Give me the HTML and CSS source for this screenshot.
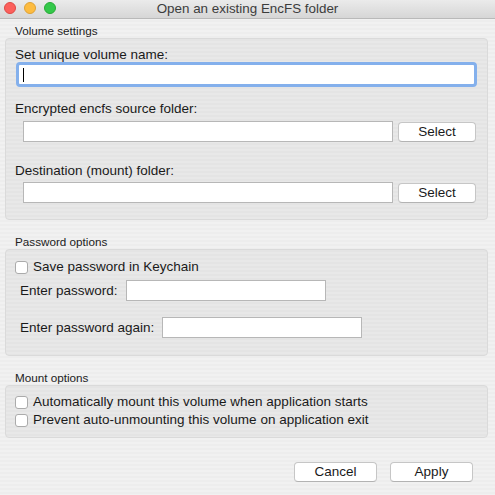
FILE: index.html
```html
<!DOCTYPE html>
<html>
<head>
<meta charset="utf-8">
<link rel="stylesheet" href="styles.css">
</head>
<body>
<div class="window">
  <div class="titlebar">
    <div class="lights">
      <span class="light red"></span>
      <span class="light yellow"></span>
      <span class="light green"></span>
    </div>
    <div class="title">Open an existing EncFS folder</div>
  </div>
  <div class="content">
    <div class="section-label first">Volume settings</div>
    <div class="group g1">
      <div class="field-label">Set unique volume name:</div>
      <div class="focus-input"><span class="caret"></span></div>
      <div class="field-label l2">Encrypted encfs source folder:</div>
      <div class="path-row r2">
        <div class="input path"></div>
        <div class="btn select">Select</div>
      </div>
      <div class="field-label l3">Destination (mount) folder:</div>
      <div class="path-row r3">
        <div class="input path"></div>
        <div class="btn select">Select</div>
      </div>
    </div>

    <div class="section-label">Password options</div>
    <div class="group g2">
      <div class="check-row"><span class="checkbox"></span><span>Save password in Keychain</span></div>
      <div class="pw-row p1"><span>Enter password:</span><div class="input pw1"></div></div>
      <div class="pw-row p2"><span>Enter password again:</span><div class="input pw2"></div></div>
    </div>

    <div class="section-label">Mount options</div>
    <div class="group g3">
      <div class="check-row tight"><span class="checkbox"></span><span>Automatically mount this volume when application starts</span></div>
      <div class="check-row tight"><span class="checkbox"></span><span>Prevent auto-unmounting this volume on application exit</span></div>
    </div>

    <div class="actions">
      <div class="btn action">Cancel</div>
      <div class="btn action">Apply</div>
    </div>
  </div>
</div>
</body>
</html>
```
FILE: styles.css
```css
* { box-sizing: border-box; }
html, body { margin: 0; padding: 0; }
body {
  width: 495px;
  height: 495px;
  overflow: hidden;
  font-family: "Liberation Sans", Arial, sans-serif;
  color: #1a1a1a;
  background: repeating-linear-gradient(180deg, #ededed 0px, #ededed 2px, #f1f1f1 2px, #f1f1f1 4px);
}
.window { width: 495px; height: 495px; display: flex; flex-direction: column; }
.titlebar {
  position: relative;
  height: 19px;
  background: linear-gradient(180deg, #ebebeb 0%, #d6d6d6 100%);
  border-bottom: 1px solid #b9b9b9;
  display: flex;
  align-items: center;
  justify-content: center;
}
.lights { position: absolute; left: 4px; top: 2px; display: flex; gap: 8px; }
.light { width: 12px; height: 12px; border-radius: 50%; display: block; }
.red { background: #fc605c; border: 1px solid #de4a45; }
.yellow { background: #fdbc40; border: 1px solid #dea236; }
.green { background: #34c84a; border: 1px solid #27aa35; }
.title { font-size: 13.4px; color: #3c3c3c; line-height: 18px; }

.content { display: flex; flex-direction: column; }
.section-label {
  font-size: 11.7px;
  line-height: 14px;
  padding-left: 15px;
  margin-top: 15px;
  color: #222;
}
.section-label.first { margin-top: 5px; }
.group {
  margin: 0 7px 0 5px;
  border: 1px solid #dadada;
  border-radius: 4px;
  background: repeating-linear-gradient(180deg, #e4e4e4 0px, #e4e4e4 2px, #e8e8e8 2px, #e8e8e8 4px);
  display: flex;
  flex-direction: column;
}
.g1 { padding: 6px 0 16px 0; }
.field-label { font-size: 13.5px; line-height: 16px; padding-left: 9px; padding-top: 2px; }
.focus-input {
  margin: -1px 10px 0 10px;
  height: 25px;
  border: 3px solid #84b0ec;
  border-radius: 4px;
  background: #fff;
  position: relative;
}
.caret { position: absolute; left: 4px; top: 3px; width: 1px; height: 14px; background: #000; }
.l2 { margin-top: 12px; }
.l3 { margin-top: 19px; }
.path-row { display: flex; align-items: center; gap: 5px; padding-left: 17px; }
.r2 { margin-top: 4px; }
.r3 { margin-top: 3px; }
.input { height: 21px; background: #fff; border: 1px solid #b7b7b7; }
.path { width: 370px; }
.btn {
  height: 20px;
  background: #fff;
  border: 1px solid #c6c6c6;
  border-bottom-color: #b3b3b3;
  border-radius: 4px;
  font-size: 13.5px;
  line-height: 18px;
  text-align: center;
  color: #1a1a1a;
}
.select { width: 78px; }

.g2 { padding: 9px 0 17px 0; }
.check-row { display: flex; align-items: center; gap: 5px; padding-left: 9px; font-size: 13.5px; line-height: 16px; }
.checkbox { width: 13px; height: 13px; border: 1px solid #ababab; border-radius: 3px; background: #fff; display: block; }
.pw-row { display: flex; align-items: center; gap: 8px; padding-left: 14px; font-size: 13.5px; }
.p1 { margin-top: 5px; }
.p2 { margin-top: 16px; }
.pw1 { width: 200px; }
.pw2 { width: 200px; }

.g3 { padding: 7px 0 8px 0; }
.check-row.tight { line-height: 18px; }

.actions { display: flex; justify-content: flex-end; gap: 13px; padding-right: 22px; margin-top: 24px; }
.action { width: 83px; }
```
